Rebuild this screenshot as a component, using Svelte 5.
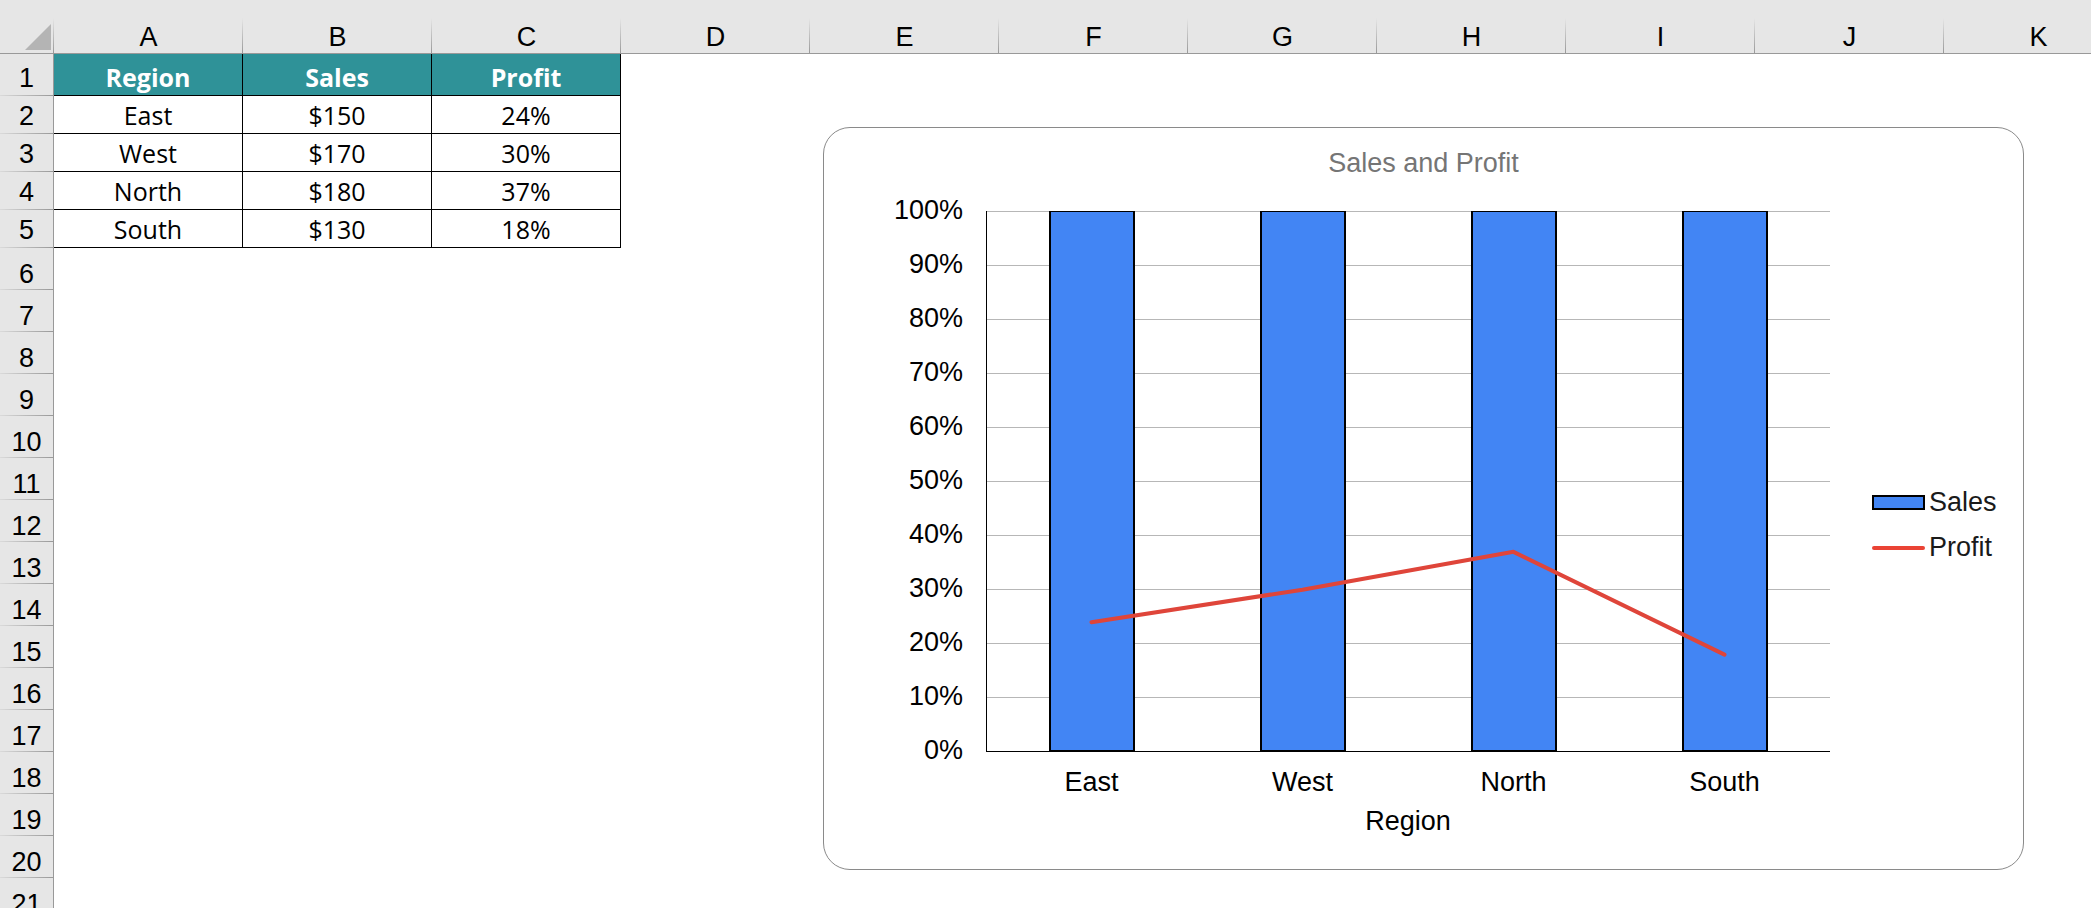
<script lang="ts">
	const columns = "ABCDEFGHIJK".split("");
	const fields = ["Region", "Sales", "Profit"];
	const regions = [
		{ name: "East", sales: 150, profit: 24 },
		{ name: "West", sales: 170, profit: 30 },
		{ name: "North", sales: 180, profit: 37 },
		{ name: "South", sales: 130, profit: 18 },
	];
	const emptyRows = Array.from({ length: 16 }, (_, i) => i + 6);
	const ticks = Array.from({ length: 11 }, (_, i) => 100 - i * 10);

	// sales are plotted on the percent axis, so every bar is clipped at 100
	const barHeight = (value: number) => Math.min(value, 100);

	const linePoints = regions
		.map((r, i) => `${((i + 0.5) / regions.length) * 100},${100 - r.profit}`)
		.join(" ");
</script>

<main class="sheet">
	<table>
		<colgroup>
			<col class="row-col" />
			{#each columns as column (column)}
				<col class="data-col" />
			{/each}
		</colgroup>
		<thead>
			<tr>
				<td class="corner">
					<svg width="26" height="26" viewBox="0 0 26 26" aria-hidden="true">
						<path d="M26 0V26H0Z" fill="#b4b4b4" />
					</svg>
				</td>
				{#each columns as column (column)}
					<th scope="col" class="letter">{column}</th>
				{/each}
			</tr>
		</thead>
		<tbody>
			<tr class="filled titles">
				<th scope="row" class="number">1</th>
				{#each fields as field (field)}
					<td class="cell title-cell">{field}</td>
				{/each}
				<td colspan="8"></td>
			</tr>
			{#each regions as region, i (region.name)}
				<tr class="filled">
					<th scope="row" class="number">{i + 2}</th>
					<td class="cell">{region.name}</td>
					<td class="cell">${region.sales}</td>
					<td class="cell">{region.profit}%</td>
					<td colspan="8"></td>
				</tr>
			{/each}
			{#each emptyRows as row (row)}
				<tr>
					<th scope="row" class="number">{row}</th>
					<td colspan="11"></td>
				</tr>
			{/each}
		</tbody>
	</table>

	<figure class="chart">
		<figcaption>Sales and Profit</figcaption>
		<div class="y-axis">
			{#each ticks as tick (tick)}
				<span>{tick}%</span>
			{/each}
		</div>
		<div class="plot">
			<div class="grid-lines">
				{#each ticks.slice(1) as tick (tick)}
					<div class="grid-line"></div>
				{/each}
			</div>
			<div class="bars">
				{#each regions as region (region.name)}
					<div class="bar-slot">
						<div class="bar" style="height: {barHeight(region.sales)}%"></div>
					</div>
				{/each}
			</div>
			<svg class="line" viewBox="0 0 100 100" preserveAspectRatio="none" aria-hidden="true">
				<polyline points={linePoints} />
			</svg>
		</div>
		<ul class="legend">
			<li><span class="swatch bar-swatch"></span>Sales</li>
			<li><span class="swatch line-swatch"></span>Profit</li>
		</ul>
		<div class="x-axis">
			<div class="x-labels">
				{#each regions as region (region.name)}
					<span>{region.name}</span>
				{/each}
			</div>
			<div>Region</div>
		</div>
	</figure>
</main>

<style>
	:global(body) {
		margin: 0;
		background: #fff;
	}

	.sheet {
		position: relative;
		height: 100vh;
		overflow: hidden;
		font-family: "Liberation Sans", Arial, sans-serif;
		font-size: 27px;
		line-height: 32px;
		color: #000;
	}

	table {
		width: 2133px;
		table-layout: fixed;
		border-collapse: separate;
		border-spacing: 0;
	}

	.row-col {
		width: 54px;
	}

	.data-col {
		width: 189px;
	}

	th,
	td {
		box-sizing: border-box;
		height: 42px;
		padding: 0;
		font-weight: normal;
		text-align: center;
		vertical-align: bottom;
	}

	.corner,
	.letter {
		height: 54px;
		border-bottom: 1px solid #999;
		background: linear-gradient(#e6e6e6, #999) right bottom / 1px 35px no-repeat #e6e6e6;
	}

	.corner {
		padding: 0 3px 3px 0;
		text-align: right;
	}

	.corner svg {
		display: block;
		margin-left: auto;
	}

	.number {
		border-right: 1px solid #999;
		background: linear-gradient(to right, #dadada, #999) left bottom / 100% 1px no-repeat #e6e6e6;
	}

	.filled > * {
		height: 38px;
	}

	.titles > * {
		height: 42px;
	}

	.filled .number {
		padding-bottom: 2px;
	}

	.cell {
		padding-bottom: 2px;
		border-right: 1px solid #000;
		border-bottom: 1px solid #000;
		font-family: "Open Sans", "Noto Sans", sans-serif;
		font-size: 25px;
	}

	.title-cell {
		background: #2f9298;
		color: #fff;
		font-weight: bold;
	}

	/* floats over the cells */
	.chart {
		position: absolute;
		top: 127px;
		left: 823px;
		box-sizing: border-box;
		width: 1201px;
		margin: 0;
		padding-bottom: 28px;
		display: grid;
		grid-template-columns: 162px 1fr 193px;
		grid-template-rows: 83px 541px auto;
		border: 1px solid #8a8a8a;
		border-radius: 27px;
		background: #fff;
	}

	figcaption {
		grid-column: 1 / -1;
		line-height: 70px;
		text-align: center;
		color: #757575;
	}

	.y-axis {
		display: flex;
		flex-direction: column;
		margin-top: -28px;
		padding-right: 23px;
		line-height: 54px;
		text-align: right;
	}

	.plot {
		display: grid;
	}

	.grid-lines,
	.bars,
	.line {
		grid-area: 1 / 1;
	}

	.grid-lines {
		display: flex;
		flex-direction: column;
		border-left: 1px solid #000;
		border-bottom: 1px solid #000;
	}

	.grid-line {
		flex: 1;
		border-top: 1px solid #b7b7b7;
	}

	.bars {
		display: flex;
	}

	.bar-slot {
		flex: 1;
		display: flex;
		align-items: flex-end;
		justify-content: center;
	}

	.bar {
		box-sizing: border-box;
		width: 86px;
		border: 2px solid #000;
		border-top-width: 1px;
		background: #4285f4;
	}

	.line {
		width: 100%;
		height: 100%;
	}

	.line polyline {
		fill: none;
		stroke: #df453a;
		stroke-width: 4px;
		stroke-linecap: round;
		stroke-linejoin: round;
		vector-effect: non-scaling-stroke;
	}

	.legend {
		margin: 0;
		padding: 269px 0 0 42px;
		list-style: none;
		line-height: 45px;
		color: #1a1a1a;
	}

	.legend li {
		display: flex;
		align-items: center;
		gap: 4px;
	}

	.swatch {
		box-sizing: border-box;
		width: 53px;
	}

	.bar-swatch {
		height: 15px;
		border: 2px solid #000;
		background: #4285f4;
	}

	.line-swatch {
		height: 4px;
		border-radius: 2px;
		background: #ea4335;
	}

	.x-axis {
		grid-column: 2;
		padding-top: 11px;
		line-height: 39px;
		text-align: center;
	}

	.x-labels {
		display: flex;
	}

	.x-labels span {
		flex: 1;
	}
</style>
